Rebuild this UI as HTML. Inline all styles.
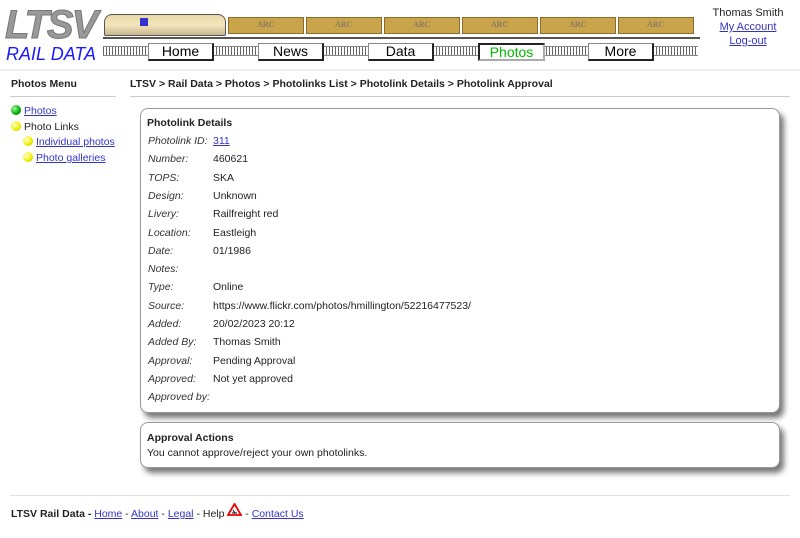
<!DOCTYPE html>
<html><head><style>
body{margin:0;width:800px;height:538px;font-family:"Liberation Sans",sans-serif;font-size:10.5px;color:#222;background:#fff;position:relative;overflow:hidden}
.a{position:absolute}
a{color:#3333cc;text-decoration:underline}
.btn{position:absolute;top:43px;width:63px;height:15px;background:#fff;border:1px solid #888;border-right:2px solid #222;border-bottom:2px solid #222;text-align:center;font-size:14px;line-height:15px;color:#000}
.ties{position:absolute;top:46px;height:10px;background:repeating-linear-gradient(90deg,#666 0 1px,transparent 1px 3px);border-top:1px solid #888;border-bottom:1px solid #888;box-sizing:border-box}
.wag{position:absolute;top:17px;width:74px;height:15px;background:#c9a44a;border:1px solid #8a6d2a}
.wag span{position:absolute;left:28px;top:2px;font:bold 8px "Liberation Serif",serif;color:#887a66}
.dot{display:inline-block;width:10px;height:10px;border-radius:50%;vertical-align:-1px;margin-right:3px}
.g{background:radial-gradient(circle at 35% 35%,#9f9,#0a0 60%,#060)}
.y{background:radial-gradient(circle at 35% 35%,#ffc,#ee0 60%,#990)}
.box{position:absolute;left:140px;width:638px;background:#fff;border:1px solid #999;border-radius:8px;box-shadow:4px 5px 6px #777}
.row{position:absolute;left:7px}
.row i{position:absolute;left:0;color:#333;white-space:nowrap}
.row b{position:absolute;left:65px;font-weight:normal;white-space:nowrap}
</style></head><body>
<div class="a" style="left:5px;top:5px;font:italic bold 40px 'Liberation Sans',sans-serif;color:#999;letter-spacing:-2px;line-height:40px;-webkit-text-stroke:1px #777">LTSV</div>
<div class="a" style="left:6px;top:44px;font:italic 18px 'Liberation Sans',sans-serif;color:#1a1aff">RAIL DATA</div>
<div class="a" style="left:104px;top:14px;width:120px;height:20px;background:linear-gradient(#e8d8a8,#f4e4bc 50%,#c9b890);border:1px solid #555;border-radius:8px 8px 2px 2px"></div>
<div class="a" style="left:140px;top:18px;width:8px;height:8px;background:#33c"></div>
<div class="wag" style="left:228px"><span>ARC</span></div>
<div class="wag" style="left:306px"><span>ARC</span></div>
<div class="wag" style="left:384px"><span>ARC</span></div>
<div class="wag" style="left:462px"><span>ARC</span></div>
<div class="wag" style="left:540px"><span>ARC</span></div>
<div class="wag" style="left:618px"><span>ARC</span></div>
<div class="a" style="left:103px;top:37px;width:597px;height:2px;background:#555"></div>
<div class="ties" style="left:103px;width:45px"></div>
<div class="ties" style="left:213px;width:45px"></div>
<div class="ties" style="left:323px;width:45px"></div>
<div class="ties" style="left:433px;width:45px"></div>
<div class="ties" style="left:543px;width:45px"></div>
<div class="ties" style="left:653px;width:45px"></div>
<div class="btn" style="left:148px">Home</div>
<div class="btn" style="left:258px">News</div>
<div class="btn" style="left:368px">Data</div>
<div class="btn" style="left:478px;color:#0b0;border-right-color:#aaa;border-bottom-color:#aaa;border-left:2px solid #222;border-top:2px solid #222;height:14px">Photos</div>
<div class="btn" style="left:588px">More</div>
<div class="a" style="left:700px;top:6px;width:96px;text-align:center;line-height:14px;font-size:11px">Thomas Smith<br><a href="#">My Account</a><br><a href="#">Log-out</a></div>
<div class="a" style="left:0;top:69px;width:800px;height:2px;background:#eee"></div>
<div class="a" style="left:11px;top:78px;font-weight:bold">Photos Menu</div>
<div class="a" style="left:10px;top:96px;width:106px;height:1px;background:#ccc"></div>
<div class="a" style="left:130px;top:78px;font-weight:bold">LTSV &gt; Rail Data &gt; Photos &gt; Photolinks List &gt; Photolink Details &gt; Photolink Approval</div>
<div class="a" style="left:130px;top:96px;width:660px;height:1px;background:#ccc"></div>
<div class="a" style="left:11px;top:104px;line-height:15.7px">
<div><span class="dot g"></span><a href="#">Photos</a></div>
<div><span class="dot y"></span>Photo Links</div>
<div style="padding-left:12px"><span class="dot y"></span><a href="#">Individual photos</a></div>
<div style="padding-left:12px"><span class="dot y"></span><a href="#">Photo galleries</a></div>
</div>
<div class="box" style="top:108px;height:303px">
<div class="a" style="left:6px;top:8px;font-weight:bold">Photolink Details</div>
<div class="row" style="top:26px"><i>Photolink ID:</i><b><a href="#">311</a></b></div>
<div class="row" style="top:44.3px"><i>Number:</i><b>460621</b></div>
<div class="row" style="top:62.6px"><i>TOPS:</i><b>SKA</b></div>
<div class="row" style="top:80.9px"><i>Design:</i><b>Unknown</b></div>
<div class="row" style="top:99.2px"><i>Livery:</i><b>Railfreight red</b></div>
<div class="row" style="top:117.5px"><i>Location:</i><b>Eastleigh</b></div>
<div class="row" style="top:135.8px"><i>Date:</i><b>01/1986</b></div>
<div class="row" style="top:154.1px"><i>Notes:</i><b></b></div>
<div class="row" style="top:172.4px"><i>Type:</i><b>Online</b></div>
<div class="row" style="top:190.7px"><i>Source:</i><b>https://www.flickr.com/photos/hmillington/52216477523/</b></div>
<div class="row" style="top:209px"><i>Added:</i><b>20/02/2023 20:12</b></div>
<div class="row" style="top:227.3px"><i>Added By:</i><b>Thomas Smith</b></div>
<div class="row" style="top:245.6px"><i>Approval:</i><b>Pending Approval</b></div>
<div class="row" style="top:263.9px"><i>Approved:</i><b>Not yet approved</b></div>
<div class="row" style="top:282.2px"><i>Approved by:</i><b></b></div>
</div>
<div class="box" style="top:422px;height:44px">
<div class="a" style="left:6px;top:9px;font-weight:bold">Approval Actions</div>
<div class="a" style="left:6px;top:24px">You cannot approve/reject your own photolinks.</div>
</div>
<div class="a" style="left:10px;top:495px;width:780px;height:1px;background:#ddd"></div>
<div class="a" style="left:11px;top:503px"><b>LTSV Rail Data - </b><a href="#">Home</a> - <a href="#">About</a> - <a href="#">Legal</a> - Help <svg width="15" height="13" viewBox="0 0 15 13" style="vertical-align:1px"><path d="M7.5 1L14 12H1Z" fill="#fff" stroke="#e00" stroke-width="1.8"/><path d="M5 10h5M6 7l2 3" stroke="#000"/></svg> - <a href="#">Contact Us</a></div>
</body></html>
